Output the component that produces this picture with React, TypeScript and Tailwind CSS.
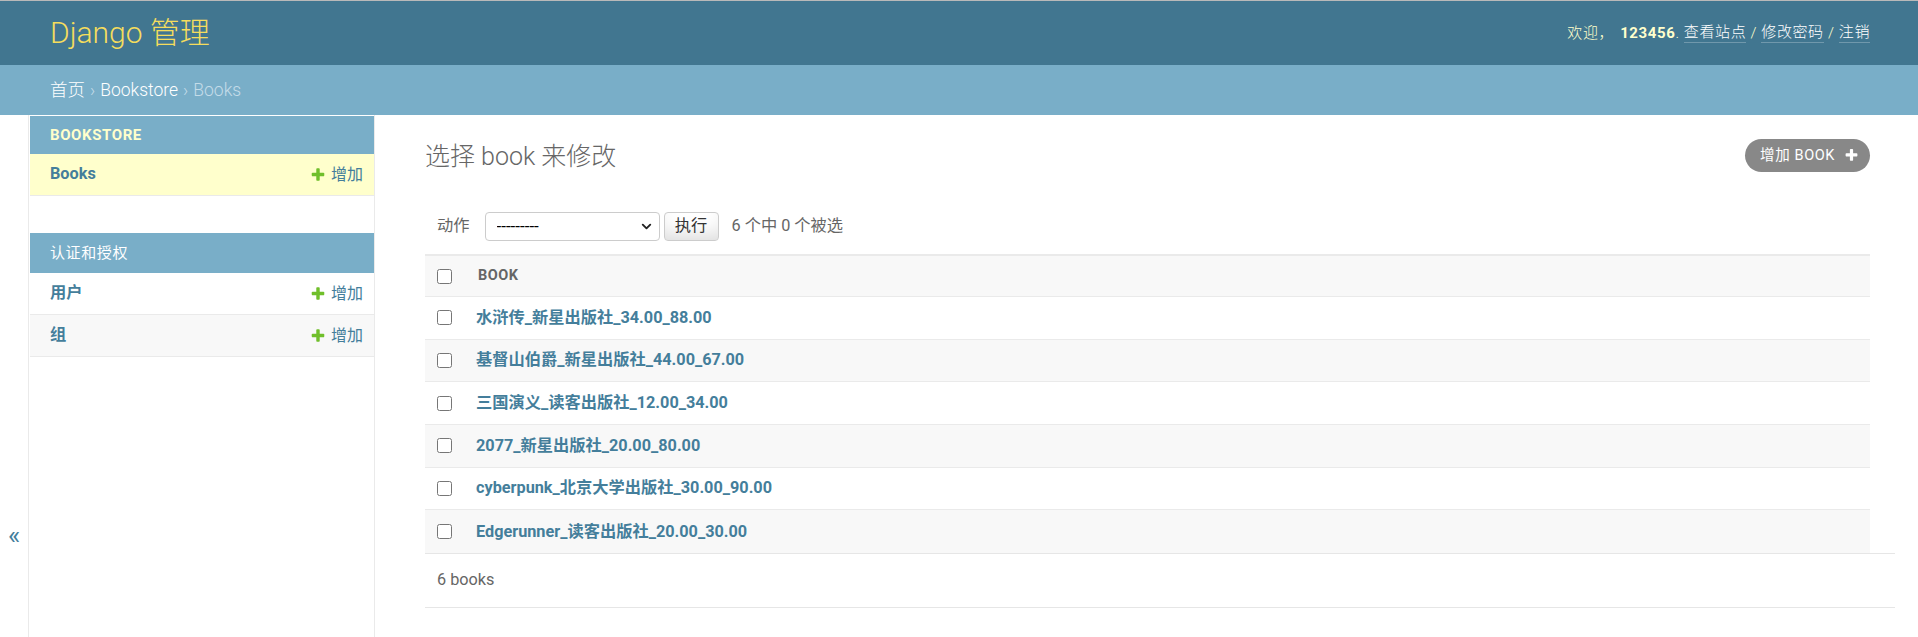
import { ChevronDown } from "lucide-react";

const BOOKS = [
  "水浒传_新星出版社_34.00_88.00",
  "基督山伯爵_新星出版社_44.00_67.00",
  "三国演义_读客出版社_12.00_34.00",
  "2077_新星出版社_20.00_80.00",
  "cyberpunk_北京大学出版社_30.00_90.00",
  "Edgerunner_读客出版社_20.00_30.00",
];

function PlusIcon({ className }: { className?: string }) {
  return (
    <svg viewBox="0 0 1792 1792" className={className} aria-hidden="true">
      <path
        fill="currentColor"
        d="M1600 736v192q0 40-28 68t-68 28h-416v416q0 40-28 68t-68 28h-192q-40 0-68-28t-28-68v-416h-416q-40 0-68-28t-28-68v-192q0-40 28-68t68-28h416v-416q0-40 28-68t68-28h192q40 0 68 28t28 68v416h416q40 0 68 28t28 68z"
      />
    </svg>
  );
}

function SideRow({
  label,
  current,
  striped,
}: {
  label: string;
  current?: boolean;
  striped?: boolean;
}) {
  return (
    <div
      className={`flex h-[42px] items-center justify-between border-b border-[#eaeaea] pl-[20px] pr-[11px] ${
        current ? "bg-[#ffffcc]" : striped ? "bg-[#f8f8f8]" : "bg-white"
      }`}
    >
      <a className="text-[16.25px] font-bold text-[#447e9b]">{label}</a>
      <a className="flex items-center gap-[5px] text-[16px] text-[#447e9b]">
        <PlusIcon className="h-[16px] w-[16px] text-[#70bf2b]" />
        增加
      </a>
    </div>
  );
}

export default function App() {
  return (
    <div className="flex h-screen flex-col overflow-hidden bg-white font-[Roboto,'Noto_Sans_CJK_SC',sans-serif] text-[#333]">
      {/* header */}
      <header className="flex h-[65px] items-center justify-between border-t border-[#b9b9b9] bg-[#417690] pl-[50px] pr-[48px]">
        <h1 className="text-[30px] font-light leading-none text-[#f5dd5d]">Django 管理</h1>
        <div className="flex items-center text-[15px] font-light tracking-[0.6px] text-[#ffffcc]">
          <span>欢迎，</span>
          <strong className="ml-[6px] font-bold">123456</strong>
          <span>.&nbsp;</span>
          <a className="border-b border-white/25 leading-[19px] text-white">查看站点</a>
          <span>&nbsp;/&nbsp;</span>
          <a className="border-b border-white/25 leading-[19px] text-white">修改密码</a>
          <span>&nbsp;/&nbsp;</span>
          <a className="border-b border-white/25 leading-[19px] text-white">注销</a>
        </div>
      </header>

      {/* breadcrumbs */}
      <div className="flex h-[50px] items-center bg-[#79aec8] px-[50px] text-[17.5px] font-light text-[#c4dce8]">
        <a className="text-white">首页</a>
        <span className="mx-[5px]">›</span>
        <a className="text-white">Bookstore</a>
        <span className="mx-[5px]">›</span>
        <span>Books</span>
      </div>

      <div className="flex flex-1">
        {/* sidebar toggle */}
        <div className="w-[29px] shrink-0 border-r border-[#eaeaea] pt-[407px] pl-[8px] text-[26px] leading-none text-[#447e9b]">
          «
        </div>

        {/* nav sidebar */}
        <nav className="w-[346px] shrink-0 border-r border-[#eaeaea] pl-[1px] pt-[1px]">
          <div className="mb-[37px]">
            <div className="flex h-[38px] items-center bg-[#79aec8] pl-[20px] text-[15px] font-bold tracking-[0.6px] text-[#ffffcc]">
              BOOKSTORE
            </div>
            <SideRow label="Books" current />
          </div>
          <div>
            <div className="flex h-[40px] items-center bg-[#79aec8] pl-[20px] text-[15px] tracking-[0.6px] text-white">
              认证和授权
            </div>
            <SideRow label="用户" />
            <SideRow label="组" striped />
          </div>
        </nav>

        {/* content */}
        <main className="flex-1 pl-[50px] pr-[23px] pt-[24px]">
          <div className="mr-[25px] flex h-[33px] items-center justify-between">
            <h1 className="pt-[2px] text-[25px] font-light leading-none text-[#666]">选择 book 来修改</h1>
            <a className="flex h-[33px] items-center gap-[9px] rounded-full bg-[#888] pl-[15px] pr-[11px] text-[14.5px] tracking-[0.6px] text-white">
              增加 BOOK
              <PlusIcon className="h-[15px] w-[15px] text-white" />
            </a>
          </div>

          {/* actions */}
          <div className="mr-[25px] mt-[40px] flex h-[29px] items-center pl-[12px] text-[16.25px] text-[#666]">
            <label>动作</label>
            <div className="relative ml-[15px] h-[29px] w-[175px]">
              <select className="h-full w-full appearance-none rounded-[4px] border border-[#ccc] bg-white pl-[11px] text-[17px] text-black">
                <option>---------</option>
              </select>
              <ChevronDown
                className="pointer-events-none absolute right-[6px] top-[7px] h-[15px] w-[15px] text-[#222]"
                strokeWidth={3}
              />
            </div>
            <button className="ml-[4px] h-[29px] w-[55px] rounded-[4px] border border-[#ccc] bg-white text-[16.25px] text-[#333] shadow-[inset_0_-15px_20px_-10px_rgba(0,0,0,0.15)]">
              执行
            </button>
            <span className="ml-[13px]">6 个中 0 个被选</span>
          </div>

          {/* results */}
          <div className="mr-[25px] mt-[13px]">
            <div className="flex h-[43px] items-center border-y border-t-2 border-[#eaeaea] bg-[#f8f8f8]">
              <div className="flex w-[53px] items-center pl-[12px]">
                <input type="checkbox" className="m-0 h-[15px] w-[15px]" />
              </div>
              <span className="text-[14.5px] font-bold tracking-[0.5px] text-[#666]">BOOK</span>
            </div>
            {BOOKS.map((b, i) => (
              <div
                key={b}
                className={`flex h-[42.7px] items-center ${
                  i < BOOKS.length - 1 ? "border-b border-[#eaeaea]" : ""
                } ${i % 2 === 1 ? "bg-[#f8f8f8]" : "bg-white"}`}
              >
                <div className="flex w-[51px] items-center pl-[12px]">
                  <input type="checkbox" className="m-0 h-[15px] w-[15px]" />
                </div>
                <a className="text-[16.25px] font-bold text-[#447e9b]">{b}</a>
              </div>
            ))}
          </div>

          {/* paginator */}
          <div className="flex h-[55px] items-center border-y border-[#e6e6e6] pl-[12px] text-[16.25px] text-[#666]">
            6 books
          </div>
        </main>
      </div>
    </div>
  );
}
